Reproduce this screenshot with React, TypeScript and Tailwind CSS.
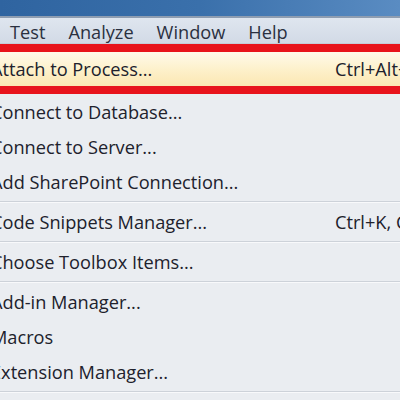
const menus = ["Test", "Analyze", "Window", "Help"];

type Item = { label: string; shortcut?: string } | "sep";

const items: Item[] = [
  { label: "Connect to Database..." },
  { label: "Connect to Server..." },
  { label: "Add SharePoint Connection..." },
  "sep",
  { label: "Code Snippets Manager...", shortcut: "Ctrl+K, Ctrl+B" },
  "sep",
  { label: "Choose Toolbox Items..." },
  "sep",
  { label: "Add-in Manager..." },
  { label: "Macros" },
  { label: "Extension Manager..." },
  "sep",
];

function Row({ label, shortcut }: { label: string; shortcut?: string }) {
  return (
    <div className="h-[35px] shrink-0 flex items-center pt-[3px] whitespace-nowrap">
      <span className="ml-[-9px] w-[344px] shrink-0">{label}</span>
      {shortcut && <span>{shortcut}</span>}
    </div>
  );
}

function App() {
  return (
    <div
      className="w-[400px] h-[400px] overflow-hidden flex flex-col bg-[#eaedf1] text-[#20212c] text-[18.2px]"
      style={{ fontFamily: '"Open Sans", "Noto Sans", sans-serif' }}
    >
      <div className="h-[16px] shrink-0 bg-gradient-to-r from-[#2f64a0] via-[#3a70ab] to-[#5a8cc2]" />
      <div className="h-[2px] shrink-0 bg-[#8e9db1]" />
      <div className="h-[26px] shrink-0 flex items-center pt-[5px] bg-gradient-to-b from-[#dfe6ef] to-[#d2dae6] border-b border-[#c5cdd8] text-[#2a3040]">
        <div className="flex gap-[23px] pl-[10px] whitespace-nowrap">
          {menus.map((m) => (
            <span key={m}>{m}</span>
          ))}
        </div>
      </div>
      <div className="h-[50px] shrink-0 border-y-[8px] border-[#e8141c] bg-gradient-to-b from-[#fffaea] via-[#fdf1cc] to-[#fbe7b2] flex items-center pt-[1px] whitespace-nowrap">
        <span className="ml-[-9px] w-[344px] shrink-0">Attach to Process...</span>
        <span>Ctrl+Alt+P</span>
      </div>
      {items.map((it, i) =>
        it === "sep" ? (
          <div key={i} className="h-[5px] shrink-0 flex flex-col justify-center">
            <div className="h-px bg-[#cdd2d9]" />
            <div className="h-px bg-[#f8f9fb]" />
          </div>
        ) : (
          <Row key={i} label={it.label} shortcut={it.shortcut} />
        )
      )}
    </div>
  );
}

export default App;
